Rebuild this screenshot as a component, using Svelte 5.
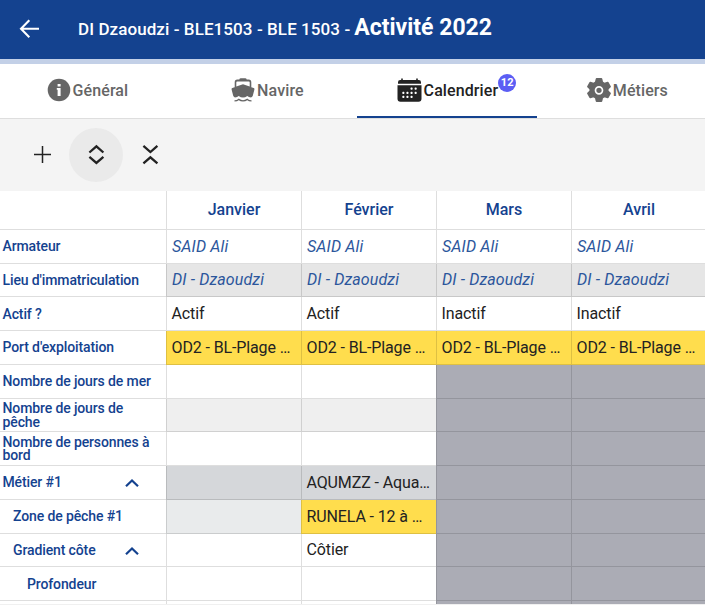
<script>
  const months = ['Janvier', 'Février', 'Mars', 'Avril'];
  const all = (text, kind) => months.map(() => ({ text, kind }));
  const off = { text: '', kind: 'disabled' };
  const blank = { text: '', kind: '' };

  const rows = [
    { label: 'Armateur', cells: all('SAID Ali', 'ref') },
    { label: "Lieu d'immatriculation", cells: all('DI - Dzaoudzi', 'ref shaded') },
    {
      label: 'Actif ?',
      cells: ['Actif', 'Actif', 'Inactif', 'Inactif'].map((text) => ({ text, kind: '' }))
    },
    { label: "Port d'exploitation", cells: all('OD2 - BL-Plage …', 'warn') },
    { label: 'Nombre de jours de mer', cells: [blank, blank, off, off] },
    {
      label: 'Nombre de jours de pêche',
      cells: [{ text: '', kind: 'pale' }, { text: '', kind: 'pale' }, off, off]
    },
    { label: 'Nombre de personnes à bord', cells: [blank, blank, off, off] },
    {
      label: 'Métier #1',
      toggle: true,
      cells: [{ text: '', kind: 'group' }, { text: 'AQUMZZ - Aqua…', kind: 'group' }, off, off]
    },
    {
      label: 'Zone de pêche #1',
      level: 1,
      cells: [{ text: '', kind: 'zone' }, { text: 'RUNELA - 12 à …', kind: 'warn' }, off, off]
    },
    {
      label: 'Gradient côte',
      level: 1,
      toggle: true,
      cells: [blank, { text: 'Côtier', kind: '' }, off, off]
    },
    { label: 'Profondeur', level: 2, cells: [blank, blank, off, off] },
    { label: '', cells: [blank, blank, off, off] }
  ];
</script>

<div class="page">
  <header>
    <svg class="back" width="24" height="24" viewBox="0 0 24 24" fill="none" stroke="#fff" stroke-width="2.1">
      <path d="M12.300 3.300 4 11.800l8.300 8.500M4.100 11.800H22" />
    </svg>
    <h1><span>DI Dzaoudzi - BLE1503 - BLE 1503 -</span><strong>Activité 2022</strong></h1>
  </header>

  <nav>
    <div class="tab">
      <svg width="24" height="24" viewBox="0 0 24 24">
        <circle cx="12" cy="12" r="11.3" fill="#666" />
        <path d="M10.6 6h3v2.6h-3zM9.8 10h3.800v8h-3v-6.300h-.8z" fill="#fff" />
      </svg>
      <span>Général</span>
    </div>
    <div class="tab">
      <svg width="24" height="24" viewBox="0 0 24 24">
        <path fill="#666" d="M8.300 1.600Q8.500.2 9.800.2h4.400q1.300 0 1.500 1.400h2q2.600 0 2.600 2.600v5l2.400.9q1 .4.700 1.400l-1.600 6.300q-.4 1.200-1.800 1.700-2.300-.3-3.700-1.500-4.300 3-8.600 0-1.400 1.200-3.700 1.500-1.400-.5-1.800-1.700L.6 11.500q-.3-1 .7-1.400l2.400-.9v-5q0-2.600 2.600-2.600zM6.200 3.600q-.9 0-.9.900v4L12 6.200l6.700 2.300v-4q0-.9-.9-.9z" />
        <path fill="none" stroke="#666" stroke-width="1.300" d="M3.500 22.800q2.500 0 4.200-1.400 4.300 3 8.600 0 1.700 1.400 4.200 1.400" />
      </svg>
      <span>Navire</span>
    </div>
    <div class="tab active">
      <svg width="25" height="24" viewBox="0 0 25 24" fill="#222">
        <path d="M1 5.800V4.200Q1 2 3.200 2h1V.5h1.600V2h13.400V.5h1.600V2h1Q24 2 24 4.200v1.600zM.5 7.200h24v13.600q0 3-3 3h-18q-3 0-3-3z" />
        <g fill="#fff">
          <rect x="13.500" y="9.600" width="2.100" height="2.100" rx=".7" /><rect x="17.600" y="9.600" width="2.100" height="2.100" rx=".7" />
          <rect x="5.300" y="13.800" width="2.100" height="2.100" rx=".7" /><rect x="9.400" y="13.800" width="2.100" height="2.100" rx=".7" /><rect x="13.500" y="13.800" width="2.100" height="2.100" rx=".7" /><rect x="17.600" y="13.800" width="2.100" height="2.100" rx=".7" />
          <rect x="5.300" y="17.800" width="2.100" height="2.100" rx=".7" /><rect x="9.400" y="17.800" width="2.100" height="2.100" rx=".7" /><rect x="13.500" y="17.800" width="2.100" height="2.100" rx=".7" />
        </g>
      </svg>
      <span>Calendrier<b class="badge">12</b></span>
    </div>
    <div class="tab">
      <svg width="24" height="24" viewBox="0 0 24 24">
        <path fill="#666" stroke="#666" stroke-width="1.800" stroke-linejoin="round" d="M9.600 1h4.800l.8 3.300 2.400 1.400 3.200-1 2.200 3.900-2.300 2.300v2.200l2.300 2.300-2.200 3.900-3.200-1-2.400 1.400-.8 3.300H9.600l-.8-3.300-2.400-1.400-3.200 1L1 15.400l2.300-2.300v-2.200L1 8.600l2.200-3.900 3.200 1 2.400-1.400z" />
        <circle cx="12" cy="12.300" r="3.500" fill="#666" stroke="#fff" stroke-width="1.700" />
      </svg>
      <span>Métiers</span>
    </div>
  </nav>

  <div class="toolbar">
    <button aria-label="Ajouter">
      <svg width="18" height="18" viewBox="0 0 18 18" fill="none" stroke="#222" stroke-width="1.500"><path d="M1 8.500h17M9.500 0v17" /></svg>
    </button>
    <button class="hover" aria-label="Déplier">
      <svg width="24" height="24" viewBox="0 0 24 24" fill="none" stroke="#222" stroke-width="2.300"><path d="m5.400 9.500 7-6.100 7 6.100M5.400 13.800l7 6.100 7-6.100" /></svg>
    </button>
    <button aria-label="Replier">
      <svg width="24" height="24" viewBox="0 0 24 24" fill="none" stroke="#222" stroke-width="2.300"><path d="m5.400 2.900 7 6.100 7-6.100M5.400 20.400l7-6.100 7 6.100" /></svg>
    </button>
  </div>

  <div class="table">
    <div class="row head">
      <div class="name"></div>
      {#each months as month}<div class="cell month">{month}</div>{/each}
    </div>
    {#each rows as row}
      <div class="row">
        <div class="name level{row.level ?? 0}">
          <span>{row.label}</span>
          {#if row.toggle}
            <svg width="14" height="10" viewBox="0 0 14 10" fill="none" stroke="#14428f" stroke-width="2.200"><path d="m1 8.300 6-5.800 6 5.800" /></svg>
          {/if}
        </div>
        {#each row.cells as cell}<div class="cell {cell.kind}"><span>{cell.text}</span></div>{/each}
      </div>
    {/each}
  </div>
</div>

<style>
  :global(body) {
    overflow: hidden;
  }
  .page {
    width: 705px;
    height: 605px;
    overflow: hidden;
    display: flex;
    flex-direction: column;
    background: #fff;
    font-family: Roboto, sans-serif;
    color: #222;
  }
  header {
    flex: none;
    box-sizing: border-box;
    height: 64px;
    padding: 0 17px 2px;
    border-bottom: 5px solid #c3d0e7;
    display: flex;
    align-items: center;
    gap: 37px;
    background: #14428f;
    color: #fff;
  }
  h1 {
    margin: 0 0 1px;
    display: flex;
    align-items: baseline;
    gap: 4px;
    font-size: 17px;
    font-weight: 500;
    line-height: 30px;
    white-space: nowrap;
  }
  h1 span {
    letter-spacing: 0.08px;
  }
  h1 strong {
    font-size: 23px;
    font-weight: 700;
  }
  nav {
    flex: none;
    box-sizing: border-box;
    height: 55px;
    display: flex;
    margin-left: -3px;
    border-bottom: 1px solid #dedede;
    background: #fff;
  }
  .tab {
    box-sizing: border-box;
    width: 180px;
    height: 54px;
    flex: none;
    display: flex;
    align-items: center;
    justify-content: center;
    gap: 1.8px;
    padding-left: 1px;
    border-bottom: 2px solid transparent;
    font-size: 16px;
    font-weight: 500;
    letter-spacing: 0.1px;
    color: #666;
  }
  .tab.active {
    color: #222;
    border-color: #14428f;
  }
  .tab span {
    position: relative;
  }
  .badge {
    position: absolute;
    left: 100%;
    top: -7px;
    width: 18px;
    height: 18px;
    border-radius: 50%;
    background: #5b5ef4;
    color: #fff;
    font-size: 11px;
    line-height: 18px;
    text-align: center;
  }
  .toolbar {
    flex: none;
    height: 72px;
    display: flex;
    align-items: center;
    padding-left: 15px;
    background: #f4f4f4;
  }
  button {
    width: 54px;
    height: 54px;
    padding: 0;
    border: 0;
    border-radius: 50%;
    background: none;
    display: flex;
    align-items: center;
    justify-content: center;
  }
  button.hover {
    background: #eaeaea;
  }
  .table {
    flex: none;
    width: 706px;
    height: 413px;
    overflow: hidden;
    border-bottom: 1px solid #f0f0f0;
  }
  .row {
    display: grid;
    grid-template-columns: 166px repeat(4, 135px);
    height: 33.75px;
  }
  .row.head {
    height: 38.9px;
  }
  .name,
  .cell {
    box-sizing: border-box;
    display: flex;
    align-items: center;
    border-bottom: 1px solid rgba(0, 0, 0, 0.13);
    min-width: 0;
  }
  .name {
    position: relative;
    padding: 1.3px 13px 0 2.5px;
    font-size: 14px;
    line-height: 13.5px;
    font-weight: 500;
    letter-spacing: -0.12px;
    color: #14428f;
  }
  .name svg {
    position: absolute;
    left: 125px;
    top: 12px;
  }
  .level1 {
    padding-left: 13px;
  }
  .level2 {
    padding-left: 27px;
  }
  .cell {
    padding: 0 0 0.2px 4.5px;
    border-left: 1px solid rgba(0, 0, 0, 0.13);
    font-size: 16px;
    letter-spacing: -0.12px;
  }
  .cell span {
    white-space: nowrap;
  }
  .month {
    justify-content: center;
    padding: 0;
    font-weight: 500;
    letter-spacing: 0;
    color: #14428f;
  }
  .ref {
    padding-left: 5px;
    font-style: italic;
    letter-spacing: 0.12px;
    color: #2c569c;
  }
  .shaded {
    background: #e6e6e6;
  }
  .pale {
    background: #efefef;
  }
  .warn {
    background: #ffdd4d;
  }
  .group {
    background: #d5d7da;
  }
  .zone {
    background: #e9ebec;
  }
  .disabled {
    background: #abacb5;
  }
</style>
